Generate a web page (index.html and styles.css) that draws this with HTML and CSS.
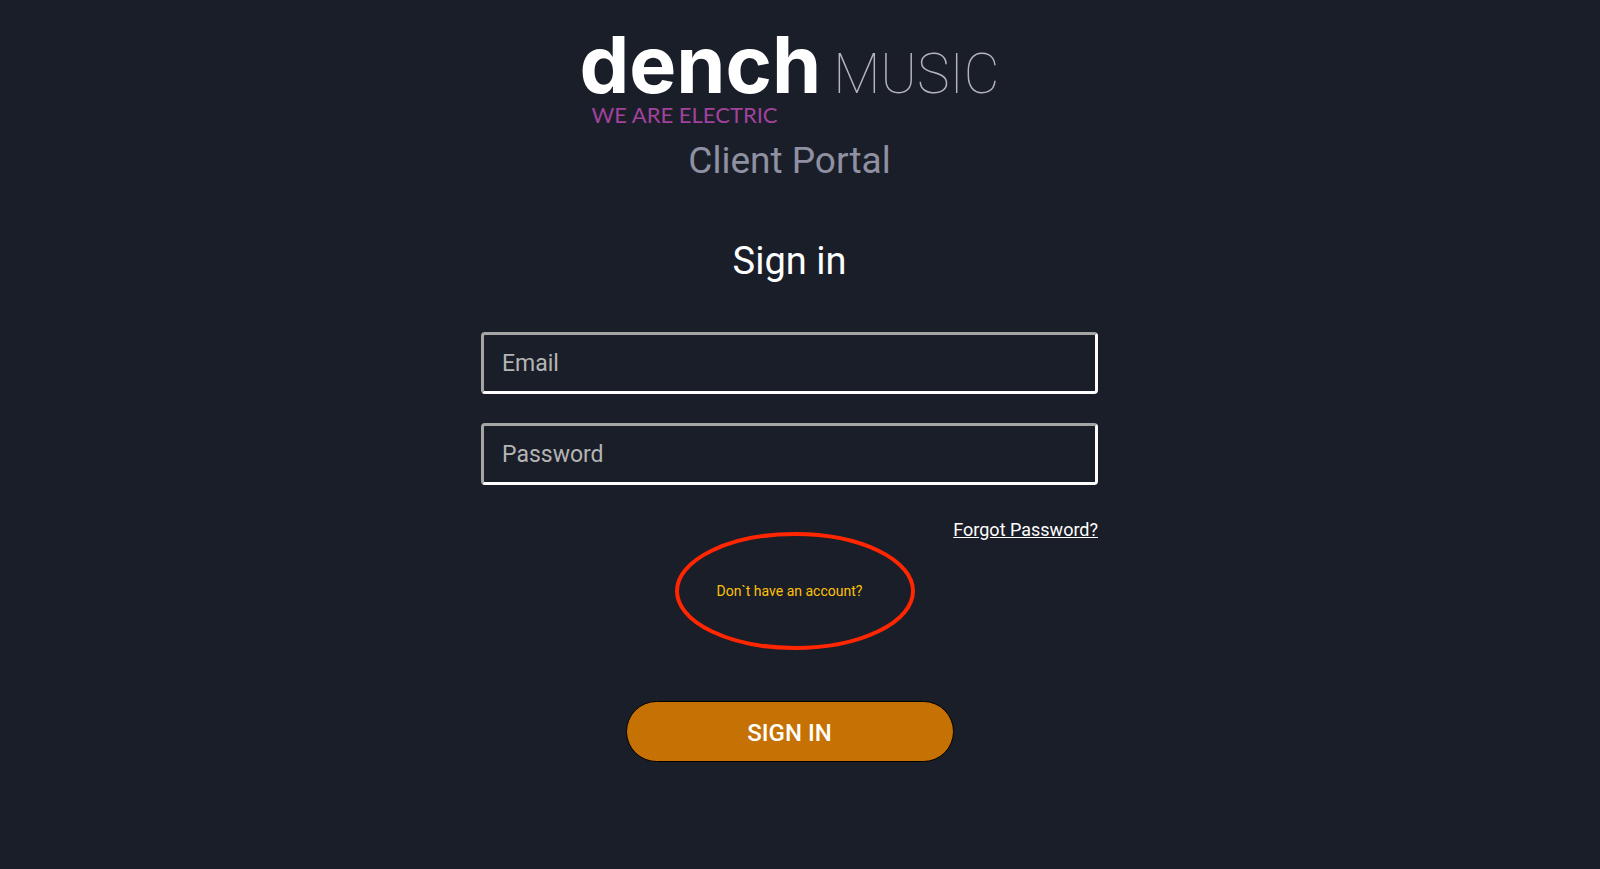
FILE: index.html
```
<!DOCTYPE html>
<html lang="en">
<head>
<meta charset="UTF-8">
<meta name="viewport" content="width=device-width, initial-scale=1.0">
<title>Dench Music - Client Portal</title>
<link rel="stylesheet" href="styles.css">
</head>
<body>
<main class="login">
    <header class="brand">
        <div class="logo">
            <div class="logo-line">
                <span class="logo-name">dench</span>
                <span class="logo-music">MUSIC</span>
            </div>
            <div class="logo-tagline">WE ARE ELECTRIC</div>
        </div>
        <p class="portal-title">Client Portal</p>
    </header>

    <h1>Sign in</h1>

    <form class="login-form">
        <input type="email" id="email" aria-label="Email" placeholder="Email">
        <input type="password" id="password" aria-label="Password" placeholder="Password">
        <a class="forgot" href="#">Forgot Password?</a>
        <div class="register">
            <a href="#">Don`t have an account?</a>
            <svg class="highlight" viewBox="0 0 240 118" aria-hidden="true">
                <ellipse cx="120" cy="59" rx="118" ry="57" />
            </svg>
        </div>
        <button type="submit">SIGN IN</button>
    </form>
</main>
</body>
</html>
```

FILE: styles.css
```
* {
    box-sizing: border-box;
}
body {
    margin: 0;
    padding: 36px 21px 24px 0;
    min-height: 100vh;
    background-color: #1a1e29;
    color: #fff;
    font-family: Roboto, sans-serif;
}
.login {
    width: 100%;
    max-width: 617px;
    margin: 0 auto;
}
.brand {
    display: flex;
    flex-direction: column;
    align-items: center;
}
.logo-line {
    display: flex;
    align-items: baseline;
    gap: 12px;
    line-height: 56px;
}
.logo-name {
    font-family: Inter, sans-serif;
    font-size: 79px;
    font-weight: 700;
}
.logo-music {
    color: #b4b5bb;
    font-size: 55px;
    font-weight: 100;
}
.logo-tagline {
    padding-left: 12px;
    color: #a2429d;
    font-family: Lato, sans-serif;
    font-size: 22px;
    line-height: 26px;
}
.portal-title {
    margin: 9px 0 0;
    color: #8f91a2;
    font-size: 37px;
    line-height: 48px;
}
h1 {
    margin: 52px 0 47px;
    font-size: 38px;
    font-weight: 400;
    line-height: 48px;
    text-align: center;
}
.login-form {
    display: flex;
    flex-direction: column;
}
.login-form input {
    width: 100%;
    height: 62px;
    margin-bottom: 29px;
    padding: 0 18px;
    background-color: transparent;
    border: 3px solid;
    border-color: #a5a5a5 #fff #fff #a5a5a5;
    border-radius: 4px;
    color: #fff;
    font-family: Roboto, sans-serif;
    font-size: 23px;
}
.login-form input::placeholder {
    color: #b4b4b4;
}
.forgot {
    align-self: flex-end;
    margin-top: 4px;
    color: #fff;
    font-size: 18px;
    line-height: 24px;
}
.register {
    position: relative;
    align-self: center;
    margin: 39px 0 100px;
    line-height: 20px;
}
.register a {
    color: #ffc107;
    font-size: 14px;
    text-decoration: none;
}
/* red ring round the register link */
.highlight {
    position: absolute;
    top: -49px;
    left: -42px;
    width: 240px;
    height: 118px;
    pointer-events: none;
}
.highlight ellipse {
    fill: none;
    stroke: #ff2600;
    stroke-width: 4;
}
button {
    align-self: center;
    width: 328px;
    max-width: 100%;
    height: 61px;
    padding: 3px 0 0;
    background-color: #c67103;
    border: 1px solid #000;
    border-radius: 31px;
    color: #fff;
    font-family: Roboto, sans-serif;
    font-size: 24px;
    font-weight: 500;
    cursor: pointer;
}
```
